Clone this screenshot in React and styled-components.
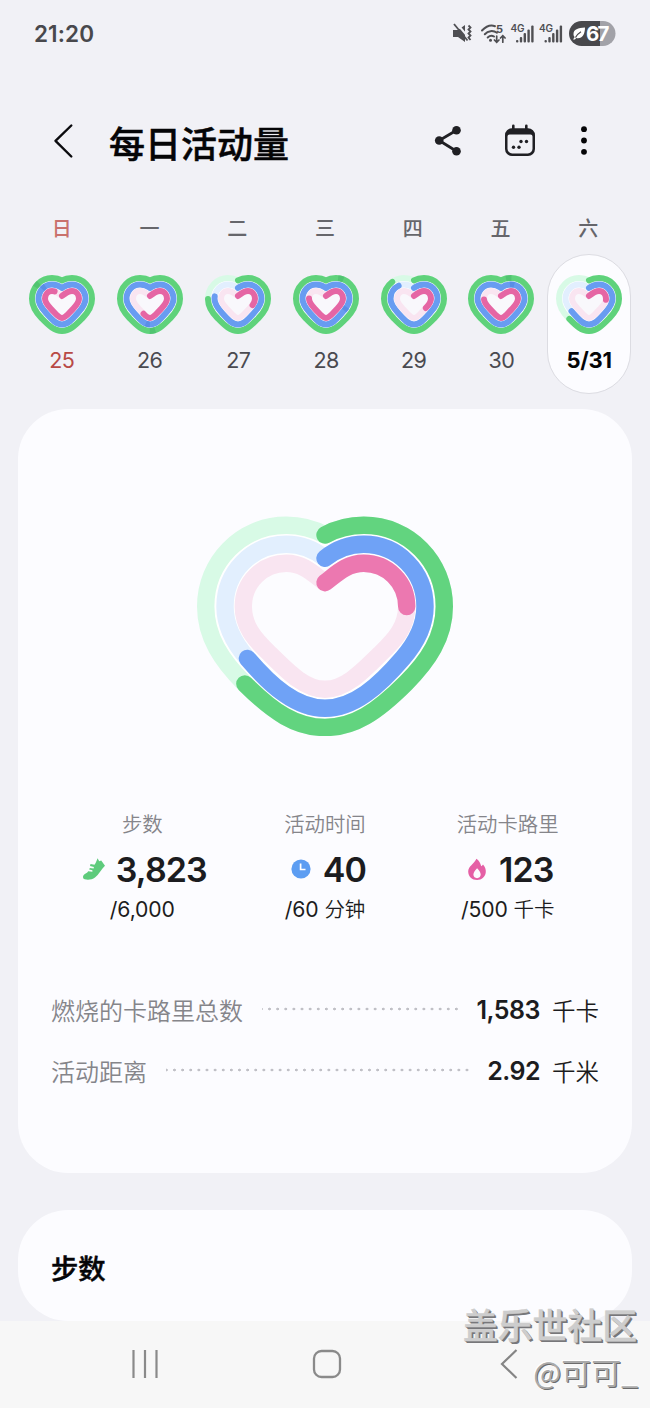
import React from "react";
import styled, { createGlobalStyle } from "styled-components";

const GlobalStyle = createGlobalStyle`
  * {
    box-sizing: border-box;
  }

  body {
    margin: 0;
    background: #f1f1f6;
    font-family: Inter, "Noto Sans CJK SC", sans-serif;
    color: #1c1c20;
  }
`;

const Screen = styled.div`
  position: relative;
  width: 650px;
  height: 1408px;
  overflow: hidden;
  display: flex;
  flex-direction: column;
  background: #f1f1f6;
`;

const StatusBar = styled.div`
  height: 68px;
  flex: none;
  padding: 0 34px 1px;
  display: flex;
  align-items: center;
  justify-content: space-between;
`;

const Time = styled.span`
  font-size: 22.5px;
  font-weight: 600;
  letter-spacing: 0.1px;
  color: #48484c;
`;

const StatusIcons = styled.svg`
  display: block;
  width: 166px;
  height: 30px;
`;

const Header = styled.header`
  height: 146px;
  flex: none;
  padding: 0 57px 0 51px;
  display: flex;
  align-items: center;
`;

const BackIcon = styled.svg`
  width: 24px;
  height: 36px;
`;

const Title = styled.h1`
  margin: 8px 0 0 34px;
  font-size: 36px;
  line-height: 50px;
  font-weight: 500;
  color: #050507;
  -webkit-text-stroke: 0.5px #050507;
`;

const Actions = styled.div`
  margin-left: auto;
  display: flex;
  align-items: center;
  gap: 39px;
`;

const Icon = styled.svg`
  display: block;
  flex: none;
  width: ${(props) => props.$w}px;
  height: ${(props) => props.$h}px;
`;

const Week = styled.div`
  height: 195px;
  flex: none;
  padding: 0 18px;
  display: grid;
  grid-template-columns: repeat(7, 1fr);
`;

const Day = styled.div`
  display: flex;
  flex-direction: column;
  align-items: center;
`;

const DayName = styled.span`
  height: 28px;
  line-height: 30px;
  font-size: 20px;
  font-weight: 500;
  color: ${(props) => (props.$sunday ? "#c9716c" : "#66666b")};
`;

const DayPill = styled.div`
  width: 84px;
  height: 140px;
  margin: 12px ${(props) => (props.$nudge ? "-2px" : "0")} 0 0;
  padding-top: 20px;
  border: 1px solid ${(props) => (props.$selected ? "#dcdce2" : "transparent")};
  border-radius: 42px;
  background: ${(props) => (props.$selected ? "#fcfcff" : "transparent")};
  display: flex;
  flex-direction: column;
  align-items: center;
`;

const DayDate = styled.span`
  margin-top: 12px;
  line-height: 28px;
  font-size: ${(props) => (props.$selected ? 22 : 21.5)}px;
  letter-spacing: ${(props) => (props.$selected ? -0.2 : -0.6)}px;
  font-weight: ${(props) => (props.$selected ? 700 : 400)};
  color: ${(props) =>
    props.$selected ? "#050507" : props.$sunday ? "#b84a45" : "#4a4a50"};
`;

const HeartSvg = styled.svg`
  display: block;
  flex: none;
  width: ${(props) => props.$w}px;
  height: ${(props) => props.$h}px;
`;

const Card = styled.section`
  flex: none;
  height: ${(props) => props.$h}px;
  margin: 0 18px ${(props) => props.$gap}px;
  padding: 0 33px;
  border-radius: 50px;
  background: #fcfcff;
`;

const HeartBox = styled.div`
  padding-top: 107px;
  height: 402px;
  display: flex;
  justify-content: center;
`;

const Stats = styled.div`
  height: 168px;
  display: grid;
  grid-template-columns: repeat(3, 1fr);
`;

const Stat = styled.div`
  display: flex;
  flex-direction: column;
  align-items: center;
`;

const StatLabel = styled.span`
  height: 28px;
  line-height: 28px;
  font-size: 20.4px;
  font-weight: 350;
  color: #85858a;
`;

const StatValue = styled.div`
  height: 44px;
  margin-top: 8px;
  padding-left: ${(props) => props.$indent}px;
  display: flex;
  align-items: center;
  gap: ${(props) => props.$gap || 12}px;
  font-size: 34px;
  font-weight: 600;
  letter-spacing: -0.9px;
  color: #1c1c20;
`;

const StatGoal = styled.span`
  height: 30px;
  margin-top: 3px;
  line-height: 30px;
  font-size: 21.2px;
  letter-spacing: -0.1px;
  font-weight: 400;

  span {
    font-size: 20.5px;
    font-weight: 350;
  }
`;

const Row = styled.div`
  height: 61px;
  display: flex;
  align-items: center;
`;

const RowLabel = styled.span`
  font-size: 24px;
  font-weight: 350;
  color: #85858a;
`;

const Dots = styled.div`
  flex: 1;
  height: 4px;
  margin: 0 17px 1px 19px;
  background: radial-gradient(circle at 5px 2px, #c0c0c6 1.1px, transparent 1.7px) right 0 top 0 /
    8.13px 4px repeat-x;
`;

const RowValue = styled.span`
  font-size: 25px;
  font-weight: 600;
  letter-spacing: -0.5px;
`;

const RowUnit = styled.span`
  margin-left: 12px;
  font-size: 23.5px;
  font-weight: 350;
`;

const CardTitle = styled.h2`
  margin: 0;
  padding-top: 40px;
  line-height: 40px;
  font-size: 27.3px;
  font-weight: 500;
  color: #050507;
  -webkit-text-stroke: 0.5px #050507;
`;

const NavBar = styled.nav`
  height: 87px;
  flex: none;
  padding: 0 131px 2px;
  display: flex;
  align-items: center;
  justify-content: space-between;
  background: #f7f7f7;
`;

const Watermark = styled.div`
  position: absolute;
  right: 13px;
  bottom: 14px;
  display: flex;
  flex-direction: column;
  align-items: flex-end;
  font-family: "Noto Sans CJK SC", sans-serif;
`;

const Community = styled.span`
  font-size: 34.8px;
  line-height: 48px;
  font-weight: 500;
  color: #cdcdcd;
  -webkit-text-stroke: 0.5px #cdcdcd;
  text-shadow: 1px 1px 0 #77777a, 2px 2px 0 #77777a;
`;

const Author = styled.span`
  margin-right: -1px;
  font-size: 30px;
  line-height: 46px;
  font-weight: 350;
  color: #a9a9a9;
  text-shadow: -1px -1px 0 #fff, 1px 1px 0 #6c6c6c;
`;

// Right half of every ring, from the notch down to the tip; the left one is its mirror.
const heartPath = (cx, pts) => {
  const pair = ([x, y]) => `${x} ${y}`;
  const flip = ([x, y]) => `${2 * cx - x} ${y}`;
  const back = [...pts].reverse();
  return `M${pair(pts[0])} C${pts.slice(1).map(pair).join(" ")} C${back.slice(1).map(flip).join(" ")}`;
};

const large = {
  viewBox: "0 0 256 220",
  stroke: 17.4,
  seam: 23,
  colors: ["#62d47f", "#6fa2f6", "#ec78b0"],
  paths: [
    [[128, 19], [140, 12.5], [153, 9.3], [166.7, 9.3], [212, 9.3], [247.3, 46], [247.3, 90.6], [247.3, 121], [231, 145], [209, 167], [180, 196], [157, 211.5], [128, 211.5]],
    [[128, 42.3], [139, 33.5], [152, 28.3], [166.7, 28.3], [201, 28.3], [228, 56], [228, 90.6], [228, 111], [219, 127], [205.7, 142.3], [182, 170], [157, 192.3], [128, 192.3]],
    [[128, 66.7], [140, 57.5], [150, 47.3], [166.7, 47.3], [190.5, 47.3], [209.7, 66.5], [209.7, 90.6], [209.7, 110], [199, 123], [183, 138], [162, 159], [147, 173.3], [128, 173.3]],
  ].map((pts) => heartPath(128, pts)),
};

const small = {
  viewBox: "0 0 198 176",
  stroke: 18,
  seam: 24,
  colors: ["#5fd27b", "#689cf1", "#e566a4"],
  paths: [
    [[99, 16], [108, 11], [118, 9], [129, 9], [162, 9], [189, 36], [189, 71], [189, 94], [177, 112], [160, 129], [138, 152], [121, 167], [99, 167]],
    [[99, 38.5], [108, 32], [118, 28.5], [129, 28.5], [151, 28.5], [169.5, 47], [169.5, 71], [169.5, 87], [161, 98], [148, 112], [130, 132], [117, 147.5], [99, 147.5]],
    [[99, 62.5], [110, 54], [118, 48], [129, 48], [141, 48], [150, 58], [150, 71], [150, 83], [142, 91], [133, 100], [117, 116], [110, 128], [99, 128]],
  ].map((pts) => heartPath(99, pts)),
};

const tracks = ["#d8fae6", "#e2effe", "#f9e5f1"];
const laps = ["#43b567", "#4c7fdc", "#d9589a"];

// a value over 100 starts a second lap, its head is marked by a darker patch
const Heart = ({ values, width, height, shape }) => (
  <HeartSvg $w={width} $h={height} viewBox={shape.viewBox} preserveAspectRatio="none" fill="none">
    {shape === small && <path d={shape.paths[2]} fill="#f9f8fc" />}
    <path d={shape.paths[1]} stroke="#fff" strokeWidth={shape.seam} strokeLinejoin="round" />
    {shape.paths.map((d, i) => {
      const value = values[i];
      const full = value >= 100;
      return (
        <g key={d} strokeWidth={shape.stroke} strokeLinecap="round" strokeLinejoin="round">
          <path d={d} stroke={tracks[i]} />
          <path
            d={d}
            pathLength="100"
            stroke={shape.colors[i]}
            strokeDasharray={full ? undefined : `${value} 200`}
          />
          {full && (
            <path
              d={d}
              pathLength="100"
              stroke={laps[i]}
              strokeOpacity="0.5"
              strokeLinecap="butt"
              strokeDasharray="3 200"
              strokeDashoffset={100 - value}
            />
          )}
        </g>
      );
    })}
  </HeartSvg>
);

const days = [
  { name: "日", date: "25", values: [183, 184, 91] },
  { name: "一", date: "26", values: [147, 150, 58] },
  { name: "二", date: "27", values: [76, 78, 30] },
  { name: "三", date: "28", values: [107, 130, 77] },
  { name: "四", date: "29", values: [87, 88, 34] },
  { name: "五", date: "30", values: [103, 107, 76] },
  { name: "六", date: "5/31", values: [63.2, 66, 24] },
];

const ShoeIcon = () => (
  <Icon $w={24} $h={24} viewBox="0 0 24 24">
    <path
      fill="#5ecb7c"
      d="M15.6 1.2 17.2 4.2 19.2 3.4 23 8.7C19.6 12 16.7 17.6 13 20.5 10.2 22.8 5.7 23.2 2.7 22.3.8 21.6.5 19.5 1.7 17.9 3.1 16.4 5.2 16 6.2 14.2L10.4 14.8 10.4 13.2 7.2 12.4 7.8 10.9 11.6 11.5 11.9 9.9 8 8.9 8.5 6.9 12.5 7.7C13.7 6.4 14.7 3.3 15.6 1.2Z"
    />
  </Icon>
);

const ClockIcon = () => (
  <Icon $w={20} $h={20} viewBox="0 0 20 20">
    <circle cx="10" cy="10" r="9.6" fill="#5c9df2" />
    <path d="M9.6 4.5V10.5H14.5" fill="none" stroke="#fff" strokeWidth="1.7" />
  </Icon>
);

const FlameIcon = () => (
  <Icon $w={20} $h={23} viewBox="0 0 20 23">
    <path
      fill="#e55fa5"
      d="M9.5.8C12.1 2.7 13.4 5.3 14.2 8.2 15 7.8 15.5 7.1 16 6.5 18 8.7 19 11.2 18.8 14 18.5 18.7 14.7 22 10.1 22 5.2 22 1.2 18.5 1.2 13.5 1.2 8.4 6.9 6.1 9.5.8Z"
    />
    <path
      fill="#fcfcff"
      d="M10.1 10.2C12 12.5 13.7 14.1 13.7 16.6 13.7 18.8 12.1 20.2 10.1 20.2S6.4 18.8 6.4 16.6C6.4 14.1 8.3 12.5 10.1 10.2Z"
    />
  </Icon>
);

const StatusGlyphs = () => (
  <StatusIcons viewBox="450 19 166 30" fontFamily="Inter, sans-serif">
    {/* muted */}
    <g fill="#4f4f53">
      <path d="M453 30h5l7-5v17l-7-5h-5z" />
      <path d="M456 22.5 469 38" stroke="#f1f1f6" strokeWidth="2" />
      <path d="M454 24 467.5 40.5" stroke="#4f4f53" strokeWidth="1.8" />
      <path
        d="M468.5 25.5l2 2-2 2 2 2-2 2 2 2-2 2 2 2.5"
        fill="none"
        stroke="#4f4f53"
        strokeWidth="1.8"
      />
    </g>
    {/* wifi */}
    <g fill="none" stroke="#4f4f53" strokeWidth="2" strokeLinecap="round">
      <path d="M482 30.5C486.5 25.8 491.5 24.8 495 26.2" />
      <path d="M484.8 34.2C488 30.8 493 30 497 32.8" />
      <path d="M487.7 37.5C489.7 35.6 492 35.3 494 36.5" />
      <path d="M496.7 36v6M494.4 40l2.3 2.3L499 40M502.8 42.2v-6.5M500.5 38l2.3-2.3 2.3 2.3" strokeWidth="1.7" />
    </g>
    <circle cx="490.5" cy="40.3" r="1.5" fill="#4f4f53" />
    <text x="496" y="33" fontSize="11" fontWeight="700" fill="#4f4f53">5</text>
    {[510.5, 539].map((x) => (
      <g key={x} fill="#4f4f53">
        <text x={x} y="32" fontSize="10" fontWeight="600" textLength="14">
          4G
        </text>
        <rect x={x + 5.5} y="40" width="2.4" height="2.5" rx="1" />
        <rect x={x + 9.3} y="37" width="2.4" height="5.5" rx="1" />
        <rect x={x + 13.1} y="33" width="2.4" height="9.5" rx="1" />
        <rect x={x + 16.9} y="29.5" width="2.4" height="13" rx="1" />
        <rect x={x + 20.7} y="25.5" width="2.4" height="17" rx="1" />
      </g>
    ))}
    {/* battery */}
    <path d="M600 21h3a12.5 12.5 0 0 1 0 25h-3z" fill="#a2a2a8" />
    <path d="M600 21h-18.5a12.5 12.5 0 0 0 0 25H600z" fill="#48484c" />
    <path d="M585 27.5c-7 .2-11.5 2-11.5 6.500 0 1.400.4 2.300 1.200 3l-1.700 2.500h2l1.200-1.500c5.800 1.200 8.800-3.400 8.800-10.500z" fill="#fff" />
    <path d="M575.5 37.5c1.500-3 3-4.300 5.500-5.800" stroke="#48484c" strokeWidth="1.2" fill="none" />
    <text x="586" y="41" fontSize="20.5" fontWeight="700" fill="#fff" textLength="23.5">
      67
    </text>
  </StatusIcons>
);

const App = () => {
  return (
    <>
      <GlobalStyle />
      <Screen>
        <StatusBar>
          <Time>21:20</Time>
          <StatusGlyphs />
        </StatusBar>

        <Header>
          <BackIcon viewBox="0 0 24 36" fill="none" stroke="#0b0b0e" strokeWidth="2.4" strokeLinecap="round" strokeLinejoin="round">
            <path d="M20.3 2.5 4.5 17.8 20.3 33.5" />
          </BackIcon>
          <Title>每日活动量</Title>
          <Actions>
            <Icon $w={32} $h={32} viewBox="0 0 32 32">
              <path d="M23.5 5.3 6.2 15.5 23.5 26.3" fill="none" stroke="#202024" strokeWidth="2.8" />
              <circle cx="23.5" cy="5.3" r="4.3" fill="#202024" />
              <circle cx="6.2" cy="15.5" r="4.3" fill="#202024" />
              <circle cx="23.5" cy="26.3" r="4.3" fill="#202024" />
            </Icon>
            <Icon $w={32} $h={34} viewBox="0 0 32 34" fill="#202024">
              <rect x="8" y="0.5" width="2.6" height="7" rx="1.3" />
              <rect x="21" y="0.5" width="2.6" height="7" rx="1.3" />
              <path
                fillRule="evenodd"
                d="M8 4.3h16a7 7 0 0 1 7 7V25a7 7 0 0 1-7 7H8a7 7 0 0 1-7-7V11.3a7 7 0 0 1 7-7zM5.5 10.5a2 2 0 0 0-2 2v12.3a4.7 4.7 0 0 0 4.7 4.7h15.6a4.7 4.7 0 0 0 4.7-4.7V12.5a2 2 0 0 0-2-2z"
              />
              <circle cx="17" cy="17.5" r="1.7" />
              <circle cx="22.5" cy="17.5" r="1.7" />
              <circle cx="9.5" cy="23.2" r="1.7" />
              <circle cx="15" cy="23.2" r="1.7" />
            </Icon>
            <Icon $w={18} $h={32} viewBox="0 0 18 32" fill="#050507">
              <circle cx="9" cy="4.2" r="2.9" />
              <circle cx="9" cy="15.5" r="2.9" />
              <circle cx="9" cy="26.8" r="2.9" />
            </Icon>
          </Actions>
        </Header>

        <Week>
          {days.map((day, i) => {
            const selected = i === days.length - 1;
            return (
              <Day key={day.date}>
                <DayName $sunday={i === 0}>{day.name}</DayName>
                <DayPill $selected={selected} $nudge={i > 1}>
                  <Heart shape={small} values={day.values} width={66} height={59} />
                  <DayDate $sunday={i === 0} $selected={selected}>
                    {day.date}
                  </DayDate>
                </DayPill>
              </Day>
            );
          })}
        </Week>

        <Card $h={764} $gap={37}>
          <HeartBox>
            <Heart shape={large} values={[63.4, 66.3, 23.8]} width={256} height={220} />
          </HeartBox>
          <Stats>
            <Stat>
              <StatLabel>步数</StatLabel>
              <StatValue $gap={10} $indent={4}>
                <ShoeIcon />
                3,823
              </StatValue>
              <StatGoal>/6,000</StatGoal>
            </Stat>
            <Stat>
              <StatLabel>活动时间</StatLabel>
              <StatValue $indent={7}>
                <ClockIcon />
                40
              </StatValue>
              <StatGoal>
                /60 <span>分钟</span>
              </StatGoal>
            </Stat>
            <Stat>
              <StatLabel>活动卡路里</StatLabel>
              <StatValue $indent={5}>
                <FlameIcon />
                123
              </StatValue>
              <StatGoal>
                /500 <span>千卡</span>
              </StatGoal>
            </Stat>
          </Stats>
          <Row>
            <RowLabel>燃烧的卡路里总数</RowLabel>
            <Dots />
            <RowValue>1,583</RowValue>
            <RowUnit>千卡</RowUnit>
          </Row>
          <Row>
            <RowLabel>活动距离</RowLabel>
            <Dots />
            <RowValue>2.92</RowValue>
            <RowUnit>千米</RowUnit>
          </Row>
        </Card>

        <Card $h={111} $gap={0}>
          <CardTitle>步数</CardTitle>
        </Card>

        <NavBar>
          <Icon $w={28} $h={30} viewBox="0 0 28 30" stroke="#8a8a8a" strokeWidth="2.2">
            <path d="M2.5 1v28M14 1v28M25.5 1v28" />
          </Icon>
          <Icon $w={30} $h={30} viewBox="0 0 30 30" fill="none" stroke="#8a8a8a" strokeWidth="2.3">
            <rect x="2" y="2" width="26" height="26" rx="7.5" />
          </Icon>
          <Icon $w={24} $h={30} viewBox="0 0 24 30" fill="none" stroke="#858585" strokeWidth="2.2">
            <path d="M21.5 1 7 15 21.5 29" />
          </Icon>
        </NavBar>

        <Watermark>
          <Community>盖乐世社区</Community>
          <Author>@可可_</Author>
        </Watermark>
      </Screen>
    </>
  );
};

export default App;
